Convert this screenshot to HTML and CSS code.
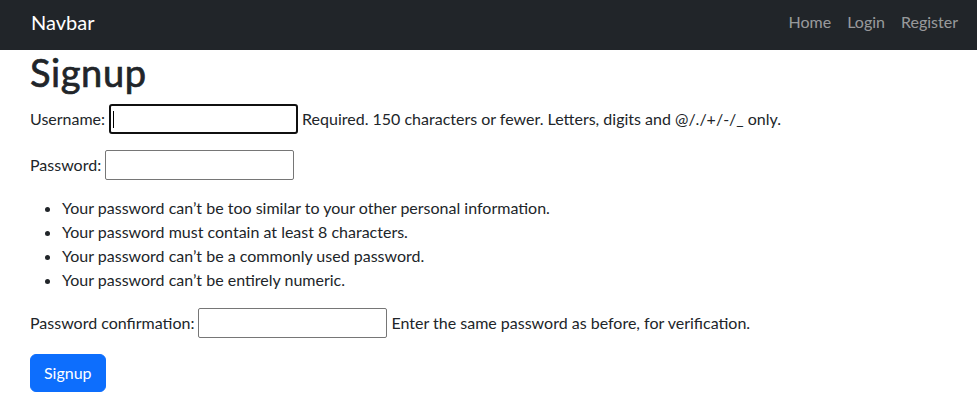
FILE: index.html
```html
<!DOCTYPE html>
<html lang="en">
<head>
<meta charset="utf-8">
<title>Signup</title>
<link rel="stylesheet" href="styles.css">
</head>
<body>
<nav class="navbar">
  <a class="brand" href="#">Navbar</a>
  <ul class="nav-links">
    <li><a href="#">Home</a></li>
    <li><a href="#">Login</a></li>
    <li><a href="#">Register</a></li>
  </ul>
</nav>
<main class="content">
  <h1 class="title">Signup</h1>
  <form class="signup-form">
    <p class="field">
      <label for="id_username">Username:</label>
      <span class="input-wrap focused"><input type="text" id="id_username" class="text-input"><span class="caret"></span></span>
      <span class="helptext">Required. 150 characters or fewer. Letters, digits and @/./+/-/_ only.</span>
    </p>
    <p class="field">
      <label for="id_password1">Password:</label>
      <span class="input-wrap"><input type="password" id="id_password1" class="text-input"></span>
    </p>
    <ul class="pw-help">
      <li>Your password can’t be too similar to your other personal information.</li>
      <li>Your password must contain at least 8 characters.</li>
      <li>Your password can’t be a commonly used password.</li>
      <li>Your password can’t be entirely numeric.</li>
    </ul>
    <p class="field">
      <label for="id_password2">Password confirmation:</label>
      <span class="input-wrap"><input type="password" id="id_password2" class="text-input"></span>
      <span class="helptext">Enter the same password as before, for verification.</span>
    </p>
    <button type="submit" class="btn-primary">Signup</button>
  </form>
</main>
</body>
</html>
```
FILE: styles.css
```css
* { box-sizing: border-box; }
html, body { margin: 0; padding: 0; }
body {
  font-family: "Lato", "Liberation Sans", sans-serif;
  font-size: 16px;
  line-height: 1.5;
  color: #212529;
  background: #fff;
}
.navbar {
  height: 50px;
  background: #212529;
  display: flex;
  align-items: center;
  justify-content: space-between;
  padding: 0 11px 6px 31px;
}
.brand {
  color: #fff;
  font-size: 20px;
  text-decoration: none;
  line-height: 30px;
}
.nav-links {
  list-style: none;
  margin: 0;
  padding: 0;
  display: flex;
}
.nav-links a {
  display: block;
  padding: 8px 8px;
  color: rgba(255, 255, 255, 0.55);
  text-decoration: none;
}
.content {
  padding: 0 30px;
}
.title {
  margin: 0 0 10px;
  font-size: 38px;
  font-weight: 400;
  -webkit-text-stroke: 0.7px #212529;
  line-height: 44px;
  letter-spacing: 0.6px;
}
.field {
  margin: 0 0 16px;
  height: 30px;
  display: flex;
  align-items: center;
  column-gap: 4px;
  white-space: nowrap;
}
.input-wrap {
  position: relative;
  display: block;
  width: 189px;
  height: 30px;
}
.text-input {
  display: block;
  width: 100%;
  height: 100%;
  font: inherit;
  padding: 1px 2px;
  border: 1px solid #767676;
  border-radius: 2px;
  background: #fff;
  outline: none;
}
.input-wrap.focused .text-input {
  border: 2px solid #101010;
  border-radius: 3px;
}
.caret {
  position: absolute;
  left: 4px;
  top: 7px;
  width: 1px;
  height: 17px;
  background: #000;
}
.pw-help {
  margin: 0 0 16px;
  padding-left: 32px;
}
.btn-primary {
  font: inherit;
  color: #fff;
  background: #0d6efd;
  border: 1px solid #0d6efd;
  border-radius: 6px;
  padding: 6px 13px;
  line-height: 24px;
}
```
